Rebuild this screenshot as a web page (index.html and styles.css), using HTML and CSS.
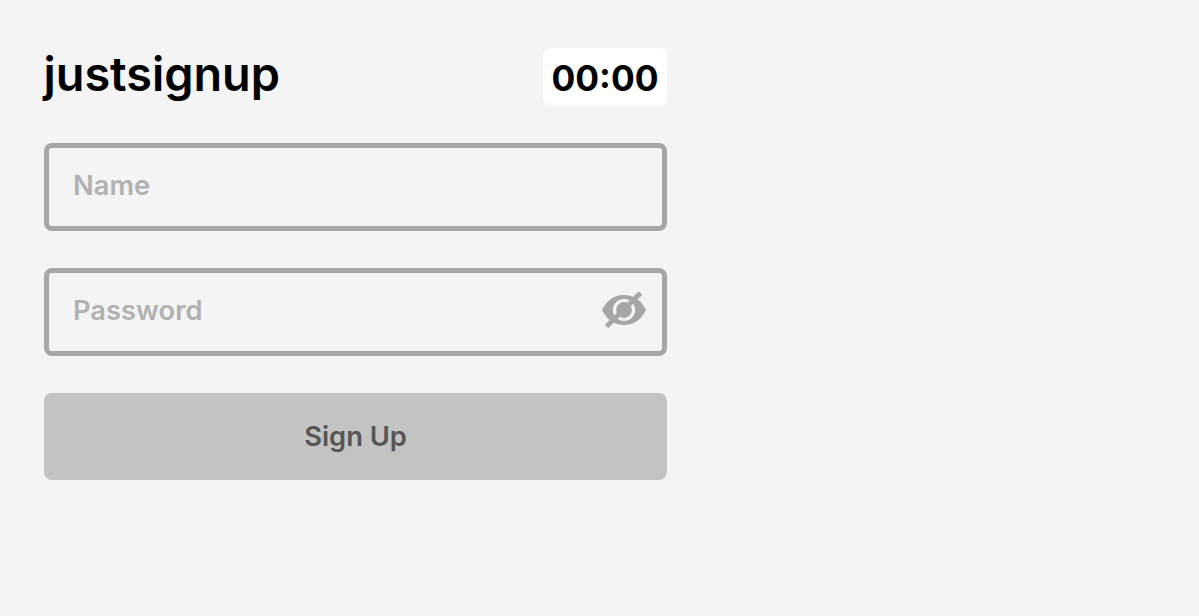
FILE: index.html
```html
<!DOCTYPE html>
<html lang="en">

<head>
    <meta charset="UTF-8">
    <meta name="viewport" content="width=device-width, initial-scale=1.0">
    <title>justsignup</title>
    <link rel="stylesheet" href="styles.css">
</head>

<body>
    <div class="container">
        <header class="header">
            <h1 class="title">justsignup</h1>
            <div class="timer">00:00</div>
        </header>
        <form class="signup-form">
            <div class="field">
                <input type="text" class="input" placeholder="Name" aria-label="Name">
            </div>
            <div class="field">
                <input type="password" class="input" placeholder="Password" aria-label="Password">
                <button type="button" class="toggle-password" aria-label="Show password">
                    <svg class="eye-icon" viewBox="0 0 44 38">
                        <path class="eye" d="M0 19C4.500 9.500 12 4 22 4S39.500 9.500 44 19C39.500 28.500 32 34 22 34S4.500 28.500 0 19Z" />
                        <circle class="ring" cx="22" cy="19" r="9.500" />
                        <path class="slash" d="M4.500 35.500L38.500 2" />
                    </svg>
                </button>
            </div>
            <button type="submit" class="submit" disabled>Sign Up</button>
        </form>
    </div>
</body>

</html>
```

FILE: styles.css
```css
* {
    box-sizing: border-box;
}

body {
    margin: 0;
    background: #f4f4f4;
    font-family: Inter, "Liberation Sans", sans-serif;
}

.container {
    width: 623px;
    margin: 48px 0 0 44px;
}

.header {
    display: flex;
    justify-content: space-between;
    align-items: flex-start;
    height: 58px;
    margin-bottom: 37px;
}

.title {
    margin: 0 0 0 -0.500px;
    font-size: 46.800px;
    line-height: 52px;
    font-weight: 600;
    color: #000;
}

.timer {
    width: 124px;
    height: 58px;
    border-radius: 8px;
    background: #fff;
    color: #000;
    font-size: 35.300px;
    line-height: 61px;
    font-weight: 700;
    text-align: center;
}

.signup-form {
    display: flex;
    flex-direction: column;
    gap: 37px;
}

.field {
    position: relative;
    height: 88px;
}

.input {
    width: 100%;
    height: 100%;
    padding: 0 24px 4px;
    border: 5px solid #a6a6a6;
    border-radius: 8px;
    background: transparent;
    font-family: inherit;
    font-size: 27.300px;
    font-weight: 600;
    color: #000;
}

.input::placeholder {
    color: #b1b1b1;
    opacity: 1;
}

/* sits over the right end of the password input */
.toggle-password {
    position: absolute;
    top: 23px;
    right: 21px;
    padding: 0;
    border: none;
    background: none;
    line-height: 0;
}

.eye-icon {
    width: 44px;
    height: 38px;
}

.eye {
    fill: #a6a6a6;
}

.ring {
    fill: #a6a6a6;
    stroke: #f4f4f4;
    stroke-width: 3.200;
}

.slash {
    stroke: #a6a6a6;
    stroke-width: 4.800;
}

.submit {
    height: 87px;
    border: none;
    border-radius: 8px;
    background: #c3c3c3;
    font-family: inherit;
    font-size: 27.300px;
    font-weight: 600;
    color: #555;
}
```
